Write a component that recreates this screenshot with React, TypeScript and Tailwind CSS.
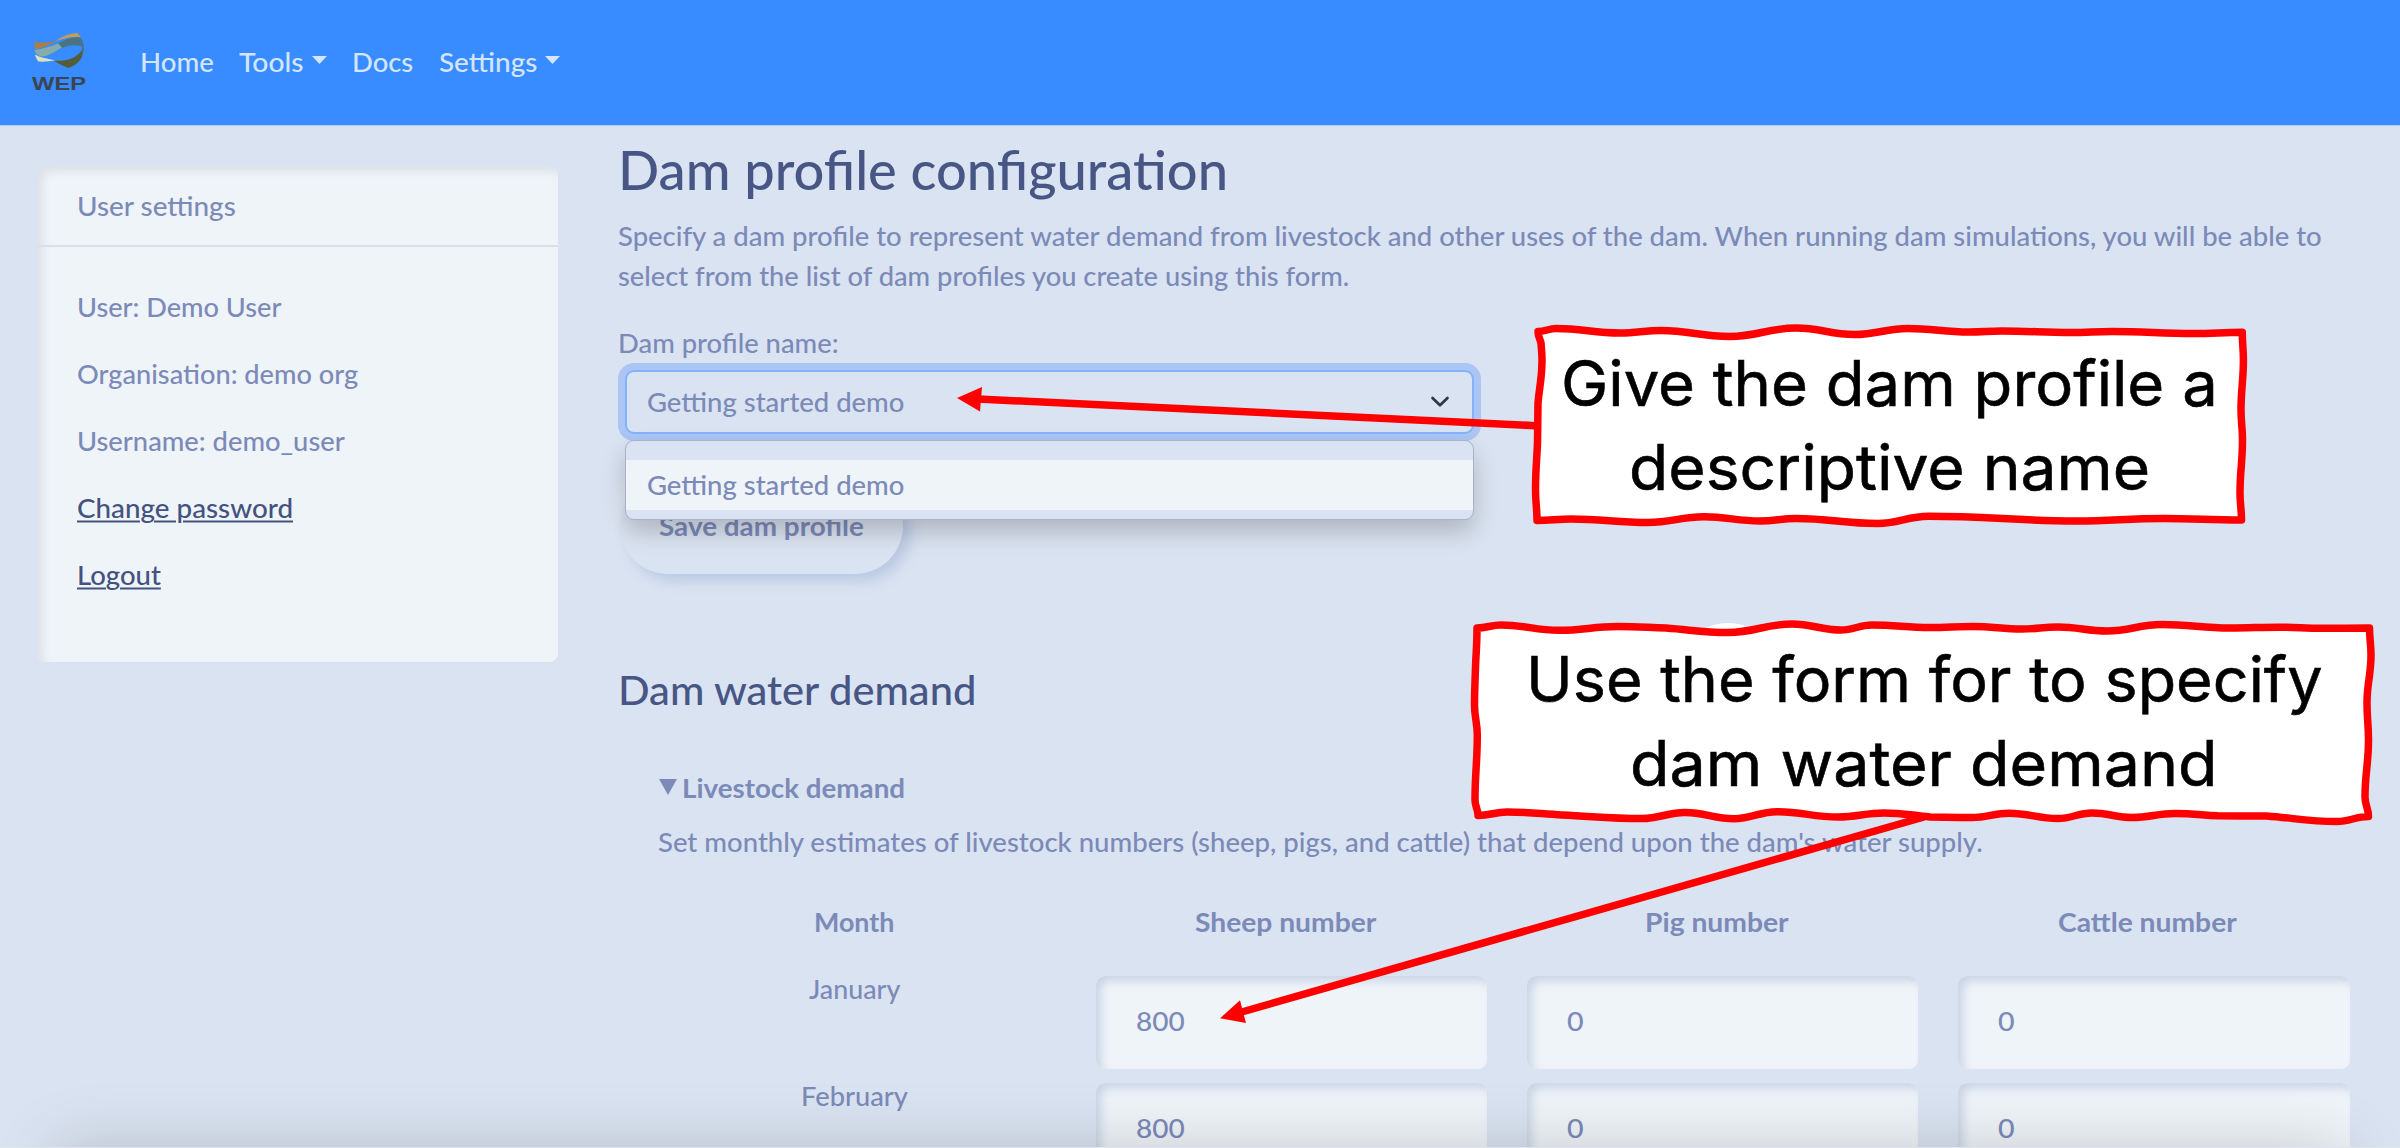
import { useLayoutEffect, useRef, useState } from "react";

type Pt = [number, number];

/** Inline text stretched so that it occupies a given width, with an optional vertical nudge. */
function Fit({ w, children, className = "", dy = 1.5 }: { w: number; children: string; className?: string; dy?: number }) {
  const ref = useRef<HTMLSpanElement>(null);
  const [ratio, setRatio] = useState(1);
  useLayoutEffect(() => {
    if (ref.current) setRatio(w / ref.current.offsetWidth);
  }, [w]);
  return (
    <span className="inline-flex justify-start whitespace-pre" style={{ width: w }}>
      <span
        ref={ref}
        className={"inline-block shrink-0 origin-left " + className}
        style={{ transform: `translateY(${dy}px) scaleX(${ratio})` }}
      >
        {children}
      </span>
    </span>
  );
}

/** Smooth curve through a run of points. */
function curve(pts: Pt[]): string {
  let d = "";
  for (let i = 0; i < pts.length - 1; i++) {
    const p0 = pts[Math.max(i - 1, 0)];
    const p1 = pts[i];
    const p2 = pts[i + 1];
    const p3 = pts[Math.min(i + 2, pts.length - 1)];
    const k = (p2[0] - p1[0]) / 2.4;
    const m = (p2[1] - p1[1]) / 2.4;
    const horizontal = Math.abs(p2[0] - p1[0]) > Math.abs(p2[1] - p1[1]);
    const turn1 = horizontal ? (p1[1] - p0[1]) * (p2[1] - p1[1]) <= 0 : (p1[0] - p0[0]) * (p2[0] - p1[0]) <= 0;
    const turn2 = horizontal ? (p3[1] - p2[1]) * (p2[1] - p1[1]) <= 0 : (p3[0] - p2[0]) * (p2[0] - p1[0]) <= 0;
    const c1: Pt = horizontal ? [p1[0] + k, p1[1] + (turn1 ? 0 : m)] : [p1[0] + (turn1 ? 0 : k), p1[1] + m];
    const c2: Pt = horizontal ? [p2[0] - k, p2[1] - (turn2 ? 0 : m)] : [p2[0] - (turn2 ? 0 : k), p2[1] - m];
    d += ` C${c1[0]} ${c1[1]} ${c2[0]} ${c2[1]} ${p2[0]} ${p2[1]}`;
  }
  return d;
}

function outline(sides: Pt[][]): string {
  return `M${sides[0][0][0]} ${sides[0][0][1]}` + sides.map(curve).join("") + "Z";
}

const nameBox: Pt[][] = [
  [[1538, 331.5], [1556, 328.5], [1620, 333], [1661, 330.5], [1729.6, 336.5], [1796, 328], [1854.6, 334.5], [1908, 328.5], [1969, 332], [2002, 331], [2071, 332.5], [2112, 331.5], [2194, 333.5], [2242.3, 332.3]],
  [[2242.3, 332.3], [2243.4, 360], [2241, 410], [2242.5, 440], [2240, 493], [2241.5, 520]],
  [[2241.5, 520], [2163, 518.5], [2076.5, 521], [1928.6, 516.2], [1877.5, 523.5], [1796, 518.5], [1760, 521], [1704, 516.8], [1648, 522.5], [1571, 519], [1537, 520.5]],
  [[1537, 520.5], [1535.5, 490], [1537.5, 443], [1538, 403], [1542, 360], [1541, 343], [1538, 331.5]],
];

const demandBox: Pt[][] = [
  [[1477, 628], [1501, 625], [1559, 630.3], [1617.6, 626.5], [1666, 628], [1728, 632.5], [1792, 624], [1841, 630], [1872, 625], [1930, 627.5], [1973, 626.5], [2022, 629], [2058, 627], [2107, 631], [2162, 624.5], [2230, 628], [2279, 627.2], [2322, 628.3], [2369.5, 628]],
  [[2369.5, 628], [2371, 655], [2367, 703], [2368.5, 740], [2365, 797], [2368.5, 816.5]],
  [[2368.5, 816.5], [2337, 821.5], [2266.6, 816], [2217.7, 815.8], [2175, 813.5], [2132, 817.5], [2092, 813], [2058, 818.5], [2009, 813.3], [1972, 817.5], [1930, 817], [1884, 813], [1838, 817], [1777, 811.7], [1734, 818.7], [1685, 812.5], [1642, 818.5], [1562, 815], [1507, 812], [1478, 815.5]],
  [[1478, 815.5], [1475, 800], [1477.3, 735], [1474.5, 705], [1475.5, 667], [1477, 628]],
];

function Caret() {
  return (
    <svg className="mb-[1px] ml-[8px] h-[8px] w-[15px]" viewBox="0 0 15 8">
      <path d="M0 0H15L7.5 8Z" fill="currentColor" />
    </svg>
  );
}

function Logo() {
  return (
    <svg className="h-[80px] w-[80px]" viewBox="0 0 80 80">
      <path d="M14.5 21.5C20 24 30 22.5 38 20.5C30 24 24 28 15 29Z" fill="#b07f3c" />
      <path d="M36 21C42 16 50 13.5 57.5 13C59 14.5 60 16 60.5 17.5C52 16 44 18.5 36 21Z" fill="#c89b53" />
      <path d="M38 23.5C46 18.5 54 16.5 60.5 17.5C62.5 20.5 63.5 23.5 64 27.5C58 24.5 50 24.5 41 28.5Z" fill="#4a7482" />
      <path d="M14.5 30C22 29 31 26.5 38 23.5L42 27.5C34 32 27 37 21.5 36.5C18 36 15.5 34 14.5 30Z" fill="#86abaa" />
      <path d="M15 34.5C20 37.5 27 38.5 36 40.5C30 41 24 42 18.5 41.5C16.5 39.5 15.5 37 15 34.5Z" fill="#dbe3c0" />
      <path d="M33 40.5C45 42 58 39 63.5 27C64 38 58 45 48 48C43 46 38 43 33 40.5Z" fill="#535d36" />
      <path d="M60 19C64.5 26 64 33 60 37C63 31 62.5 25 60 19Z" fill="#4f6f7a" />
      <text x="12" y="70" fontFamily="Liberation Sans" fontWeight="700" fontSize="18.5" textLength="54" lengthAdjust="spacingAndGlyphs" fill="#3c4450">
        WEP
      </text>
    </svg>
  );
}

const facts: [string, number][] = [
  ["User: Demo User", 204],
  ["Organisation: demo org", 281],
  ["Username: demo_user", 268],
];

const months: { name: string; w: number; values: string[] }[] = [
  { name: "January", w: 91, values: ["800", "0", "0"] },
  { name: "February", w: 107, values: ["800", "0", "0"] },
];

export default function App() {
  return (
    <div className="relative h-[1148px] w-[2400px] overflow-hidden bg-[#dae3f1] font-[Lato,'Noto_Sans',sans-serif] text-[26.5px] leading-[40px] font-medium text-[#7c8ab8]">
      <nav className="flex h-[126px] items-start border-b border-[#a9cdf8] bg-[#388cff] text-[#d3e5ff]">
        <div className="mt-[20px] ml-[20px]">
          <Logo />
        </div>
        <div className="mt-[40px] ml-[40px] flex h-[40px]">
          <a className="w-[99px]"><Fit w={74}>Home</Fit></a>
          <a className="flex w-[113px] items-center"><Fit w={65}>Tools</Fit><Caret /></a>
          <a className="w-[87px]"><Fit w={61}>Docs</Fit></a>
          <a className="flex items-center"><Fit w={98}>Settings</Fit><Caret /></a>
        </div>
      </nav>

      <div className="flex items-start">
        <aside className="mt-[40px] ml-[37px] h-[496px] w-[521px] rounded-[9px] bg-[#eff4f9] shadow-[inset_5px_5px_10px_#dcdfe6,inset_-2px_-2px_4px_#f3f6fb]">
          <div className="h-[81px] border-b-2 border-[#d9e0ec] pt-[18px] pl-[40px]">
            <Fit w={159}>User settings</Fit>
          </div>
          <div className="flex flex-col gap-[27px] pt-[38px] pl-[40px]">
            {facts.map(([t, w]) => (
              <div key={t} className="h-[40px]"><Fit w={w}>{t}</Fit></div>
            ))}
            <a className="h-[40px] text-[#44527f]">
              <Fit w={216} className="underline decoration-2 underline-offset-[3px]">Change password</Fit>
            </a>
            <a className="h-[40px] text-[#44527f]">
              <Fit w={84} className="underline decoration-2 underline-offset-[3px]">Logout</Fit>
            </a>
          </div>
        </aside>

        <main className="ml-[60px] flex flex-col pt-[9px]">
          <h1 className="h-[65px] text-[54.5px] leading-[65px] text-[#485685]">
            <Fit w={610}>Dam profile configuration</Fit>
          </h1>
          <p className="mt-[14px] flex flex-col items-start">
            <Fit w={1704}>Specify a dam profile to represent water demand from livestock and other uses of the dam. When running dam simulations, you will be able to</Fit>
            <Fit w={731}>select from the list of dam profiles you create using this form.</Fit>
          </p>
          <label className="mt-[27px] h-[40px]"><Fit w={221}>Dam profile name:</Fit></label>

          <div className="relative z-10 mt-[9px] ml-[7px] flex h-[64px] w-[849px] items-center justify-between rounded-[9px] border-2 border-[#85b3fb] bg-[#dae3f1] pr-[22px] pb-[4px] pl-[20px] shadow-[0_0_0_7px_#abc5f5]">
            <Fit w={257}>Getting started demo</Fit>
            <svg className="mt-[3px] h-[12px] w-[20px]" viewBox="0 0 20 12">
              <path d="M2.5 2L10 9.3L17.5 2" fill="none" stroke="#2f3742" strokeWidth="2.7" strokeLinecap="round" strokeLinejoin="round" />
            </svg>
            <div className="absolute top-[68px] -left-[2px] h-[80px] w-[849px] rounded-[9px] border-[1.5px] border-[#aab2c5] bg-[#dae3f1] pt-[19px] shadow-[0_12px_24px_rgba(0,0,0,0.2)]">
              <div className="h-[50px] bg-[#eff4f9] pt-[3px] pl-[21px]"><Fit w={257}>Getting started demo</Fit></div>
            </div>
          </div>

          <button className="mt-[43px] ml-[2px] h-[97px] w-[283px] rounded-[48px] bg-[#dae3f1] pb-[3px] font-bold shadow-[7px_7px_14px_#b9c8e1,-7px_-7px_14px_#e2eaf6]">
            <Fit w={205}>Save dam profile</Fit>
          </button>

          <h3 className="mt-[90px] h-[48px] text-[40px] leading-[48px] text-[#485685]">
            <Fit w={358}>Dam water demand</Fit>
          </h3>

          <section className="mt-[54px]">
            <div className="ml-[41px] flex h-[40px] items-center font-bold">
              <svg className="mt-[2px] mr-[5px] h-[16px] w-[18px]" viewBox="0 0 18 16">
                <path d="M0 0H18L9 16Z" fill="currentColor" />
              </svg>
              <Fit w={223}>Livestock demand</Fit>
            </div>
            <p className="mt-[14px] ml-[40px] h-[40px]">
              <Fit w={1325}>Set monthly estimates of livestock numbers (sheep, pigs, and cattle) that depend upon the dam's water supply.</Fit>
            </p>
            <div className="mt-[40px] ml-[14px] grid grid-cols-[444px_431px_431px_431px] text-center font-bold">
              <div><Fit w={80}>Month</Fit></div>
              <div className="pr-[12px]"><Fit w={181}>Sheep number</Fit></div>
              <div className="pr-[12px]"><Fit w={144}>Pig number</Fit></div>
              <div className="pr-[12px]"><Fit w={179}>Cattle number</Fit></div>
            </div>
            <div className="mt-[27px] ml-[14px]">
              {months.map((m) => (
                <div key={m.name} className="grid h-[107px] grid-cols-[444px_431.2px_431.2px_431.2px]">
                  <div className="text-center"><Fit w={m.w}>{m.name}</Fit></div>
                  {m.values.map((v, i) => (
                    <div key={i} className="mx-[20px] mt-[9px] flex h-[93px] items-center rounded-[9px] bg-[#eff4f9] pb-[4px] pl-[40px] shadow-[inset_5px_5px_10px_#c9d4e5,inset_-3px_-3px_7px_#f3f4fa]">
                      <Fit w={v.length * 16.2} dy={0}>{v}</Fit>
                    </div>
                  ))}
                </div>
              ))}
            </div>
          </section>
        </main>
      </div>

      <div className="absolute top-[1147px] left-[56px] z-20 h-[200px] w-[2290px] shadow-[0_0_60px_rgba(0,0,0,0.17)]" />
      <div className="absolute top-[1147px] left-0 z-20 h-px w-full bg-[#dfe5ee]" />

      <svg className="absolute top-0 left-0 z-30 h-[1148px] w-[2400px]" viewBox="0 0 2400 1148">
        <path d="M1700 631Q1727 615 1758 631Z" fill="#fff" />
        <g stroke="#ff0000" strokeWidth="7.5" strokeLinejoin="round" fill="none">
          <path d="M1536 425.7L978 399" />
          <path d="M1924 817L1240 1012.5" />
          <path d={outline(nameBox)} fill="#fff" />
          <path d={outline(demandBox)} fill="#fff" />
        </g>
        <path d="M957 398L982 387L980 411.5Z" fill="#ff0000" />
        <path d="M1220 1018.3L1240 1000.3L1246 1023Z" fill="#ff0000" />
      </svg>

      <div className="absolute top-[341px] left-[1539px] z-40 flex w-[700px] flex-col items-center font-[Inter,sans-serif] text-[63px] leading-[84px] font-normal text-black [-webkit-text-stroke:0.6px_#000]">
        <Fit w={657} dy={0}>Give the dam profile a</Fit>
        <Fit w={521} dy={0}>descriptive name</Fit>
      </div>
      <div className="absolute top-[637px] left-[1475px] z-40 flex w-[897px] flex-col items-center font-[Inter,sans-serif] text-[63px] leading-[84px] font-normal text-black [-webkit-text-stroke:0.6px_#000]">
        <Fit w={796} dy={0}>Use the form for to specify</Fit>
        <Fit w={588} dy={0}>dam water demand</Fit>
      </div>
    </div>
  );
}
